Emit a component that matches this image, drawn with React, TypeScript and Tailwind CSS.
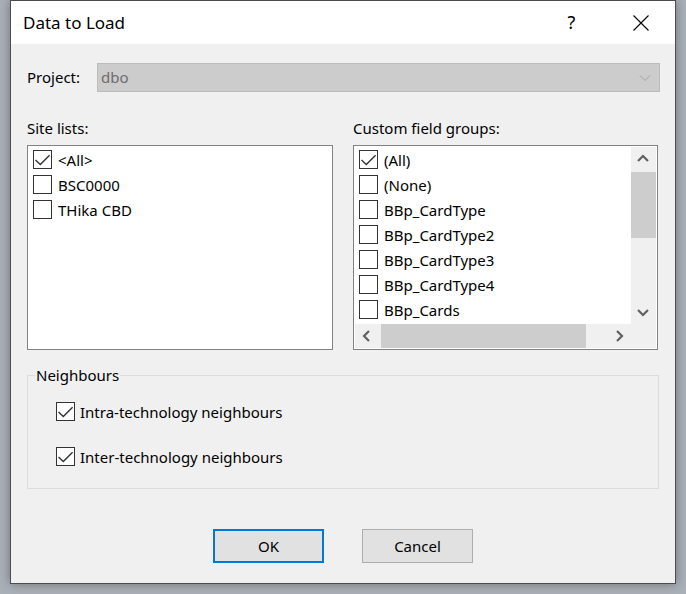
import React from "react";

function CheckBox({ checked }: { checked?: boolean }) {
  return (
    <span className="w-[19px] h-[19px] border border-[#333333] bg-white flex shrink-0">
      {checked && (
        <svg width="17" height="17" viewBox="0 0 17 17">
          <path d="M1.5 9 L6.3 13.6 L15.6 4.2" fill="none" stroke="#333333" strokeWidth="1.4" />
        </svg>
      )}
    </span>
  );
}

function ListRow({ label, checked }: { label: string; checked?: boolean }) {
  return (
    <div className="h-[25px] flex items-center pl-[4px] gap-[6px] whitespace-nowrap">
      <CheckBox checked={checked} />
      <span className="pt-[1px]">{label}</span>
    </div>
  );
}

function Chevron({ dir }: { dir: "up" | "down" | "left" | "right" }) {
  const d = {
    up: "M7 14 L12 9 L17 14",
    down: "M7 10 L12 15 L17 10",
    left: "M14 7 L9 12 L14 17",
    right: "M10 7 L15 12 L10 17",
  }[dir];
  return (
    <svg width="24" height="24" viewBox="0 0 24 24">
      <path d={d} fill="none" stroke="#606060" strokeWidth="2.2" />
    </svg>
  );
}

const customGroups = [
  { label: "(All)", checked: true },
  { label: "(None)" },
  { label: "BBp_CardType" },
  { label: "BBp_CardType2" },
  { label: "BBp_CardType3" },
  { label: "BBp_CardType4" },
  { label: "BBp_Cards" },
];

export default function App() {
  return (
    <div className="w-[686px] h-[594px] bg-[#aab0b8] flex font-['Noto_Sans','Liberation_Sans',sans-serif] text-[15px] text-black">
      <div className="ml-[10px] w-[666px] h-[584px] border border-[#4d4d4d] bg-[#f0f0f0] flex flex-col shadow-[0_0_10px_rgba(0,0,0,0.35)]">
        {/* title bar */}
        <div className="h-[43px] bg-white flex items-center shrink-0">
          <span className="ml-[12px] text-[17px] pt-[1px]">Data to Load</span>
          <span className="ml-auto w-[69px] h-full flex items-center justify-center text-[18px]">?</span>
          <span className="w-[69px] h-full flex items-center justify-center">
            <svg width="16" height="16" viewBox="0 0 16 16">
              <path d="M0.5 0.5 L15.5 15.5 M15.5 0.5 L0.5 15.5" stroke="#000" strokeWidth="1.1" />
            </svg>
          </span>
        </div>

        <div className="flex-1 flex flex-col pl-[16px] pt-[19px]">
          {/* project */}
          <div className="flex items-center h-[29px]">
            <span className="w-[70px]">Project:</span>
            <div className="w-[563px] h-[29px] bg-[#cccccc] border border-[#bcbcbc] flex items-center pl-[3px] pr-[8px]">
              <span className="text-[#6d6d6d]">dbo</span>
              <svg className="ml-auto" width="12" height="8" viewBox="0 0 12 8">
                <path d="M1 1.5 L6 6.5 L11 1.5" fill="none" stroke="#a3a3a3" strokeWidth="1" />
              </svg>
            </div>
          </div>

          {/* lists */}
          <div className="flex gap-[20px] mt-[26px]">
            <div className="w-[306px] flex flex-col">
              <span className="h-[20px] leading-[20px]">Site lists:</span>
              <div className="mt-[7px] h-[205px] border border-[#828282] bg-white p-[1px]">
                <ListRow label="<All>" checked />
                <ListRow label="BSC0000" />
                <ListRow label="THika CBD" />
              </div>
            </div>
            <div className="w-[305px] flex flex-col">
              <span className="h-[20px] leading-[20px]">Custom field groups:</span>
              <div className="mt-[7px] h-[205px] border border-[#828282] bg-white p-[1px] flex flex-col">
                <div className="flex flex-1 min-h-0">
                  <div className="flex-1 overflow-hidden">
                    {customGroups.map((g) => (
                      <ListRow key={g.label} label={g.label} checked={g.checked} />
                    ))}
                  </div>
                  <div className="w-[25px] bg-[#f0f0f0] flex flex-col">
                    <Chevron dir="up" />
                    <div className="h-[66px] bg-[#cdcdcd] mt-[1px]" />
                    <div className="flex-1" />
                    <Chevron dir="down" />
                  </div>
                </div>
                <div className="h-[24px] bg-[#f0f0f0] flex">
                  <Chevron dir="left" />
                  <div className="w-[205px] h-full bg-[#cdcdcd] ml-[2px]" />
                  <div className="flex-1" />
                  <Chevron dir="right" />
                  <div className="w-[25px]" />
                </div>
              </div>
            </div>
          </div>

          {/* neighbours */}
          <fieldset className="mt-[15px] w-[632px] h-[124px] border border-[#dcdcdc]">
            <legend className="ml-[7px] px-[1px] h-[20px] leading-[20px]">Neighbours</legend>
            <div className="pl-[28px] pt-[14px] flex flex-col gap-[20px]">
              <div className="h-[25px] flex items-center gap-[5px]">
                <CheckBox checked />
                <span className="pt-[1px]">Intra-technology neighbours</span>
              </div>
              <div className="h-[25px] flex items-center gap-[5px]">
                <CheckBox checked />
                <span className="pt-[1px]">Inter-technology neighbours</span>
              </div>
            </div>
          </fieldset>

          {/* buttons */}
          <div className="mt-[40px] flex justify-center gap-[38px] pr-[16px]">
            <button className="w-[111px] h-[34px] bg-[#e1e1e1] border-2 border-[#0078d7]">OK</button>
            <button className="w-[111px] h-[34px] bg-[#e1e1e1] border border-[#adadad]">Cancel</button>
          </div>
        </div>
      </div>
    </div>
  );
}
